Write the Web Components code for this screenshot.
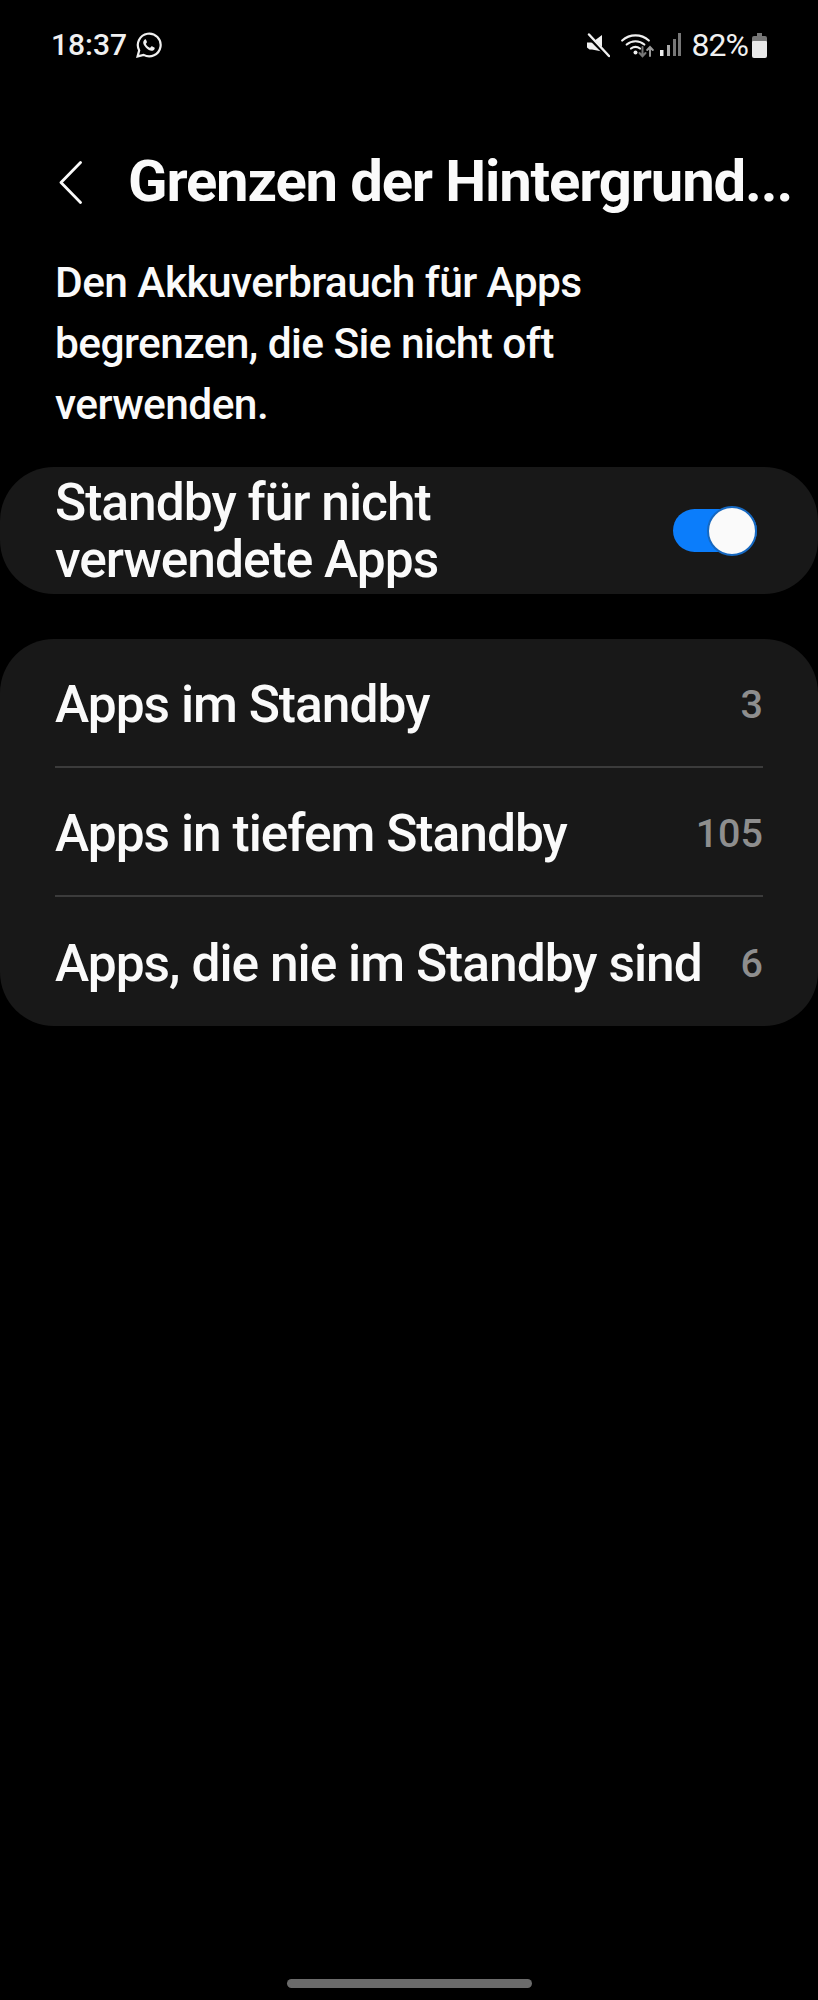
<!DOCTYPE html>
<html lang="de">
<head>
<meta charset="utf-8">
<title>Grenzen der Hintergrundnutzung</title>
<style>
  html, body { margin: 0; background: #000; }
  body { width: 818px; height: 2000px; overflow: hidden; display: flex; flex-direction: column; color: #fafafa; font-family: Roboto, "Liberation Sans", sans-serif; }
</style>
</head>
<body>
<status-bar time="18:37" battery="82%"></status-bar>
<page-header>Grenzen der Hintergrund...</page-header>
<page-intro>Den Akkuverbrauch für Apps<br>begrenzen, die Sie nicht oft<br>verwenden.</page-intro>
<switch-card>Standby für nicht<br>verwendete Apps</switch-card>
<list-card>
  <list-row count="3">Apps im Standby</list-row>
  <list-row count="105">Apps in tiefem Standby</list-row>
  <list-row count="6">Apps, die nie im Standby sind</list-row>
</list-card>
<home-bar></home-bar>

<script>
class StatusBar extends HTMLElement {
  constructor() {
    super();
    const shadow = this.attachShadow({ mode: "open" });
    shadow.innerHTML = `\
<style>
  :host { display: flex; align-items: center; height: 32px; margin-top: 29px; padding: 0 51px 0 51px; font-size: 30px; font-weight: 500; color: #f0f0f0; }
  svg { display: block; flex: none; }
  #time { line-height: 32px; }
  #wa { margin-left: 9px; }
  #spacer { flex: 1; }
  #mute { margin-right: 11px; }
  #wifi { margin-right: 5px; }
  #signal { margin-right: 11px; }
  #pct { font-size: 32px; font-weight: 400; letter-spacing: -1px; line-height: 32px; margin-right: 4px; }
</style>
<span id="time">${this.getAttribute("time")}</span>
<svg id="wa" width="26" height="26" viewBox="0 0 26 26" fill="none" stroke="#f0f0f0">
  <path stroke-width="2.2" d="M1.6 24.4l1.6-6A11.4 11.4 0 1 1 7.6 22.9z"/>
  <path fill="#f0f0f0" stroke="none" d="M9.6 7.2c-.5 0-1 .2-1.4.7-.6.7-1 1.500-1 2.600 0 1.700 1.100 3.400 2.800 5.200 1.900 1.900 3.800 3 5.600 3 1.200 0 2.100-.6 2.700-1.300.4-.5.500-1.200.4-1.700l-2.700-1.400c-.3-.1-.5 0-.7.200l-.9 1.100c-.2.200-.4.200-.7.100-1.700-.7-3-2-3.800-3.600-.1-.3 0-.5.200-.7l.7-.9c.2-.2.200-.4.100-.7l-1.100-2.600z"/>
</svg>
<span id="spacer"></span>
<svg id="mute" width="23" height="25" viewBox="0 0 23 25">
  <path fill="#f0f0f0" d="M0 9.500h5L15 2v16.500L5 16.500H2.500L0 14.500z"/>
  <path stroke="#000" stroke-width="4" d="M0 2l22 22"/>
  <path stroke="#f0f0f0" stroke-width="2.400" stroke-linecap="round" d="M2 1.500l20 21.500"/>
</svg>
<svg id="wifi" width="33" height="26" viewBox="0 0 33 26" fill="none" stroke-linecap="round">
  <g stroke="#f0f0f0" stroke-width="2.200">
    <path d="M1.200 8.500a20 20 0 0 1 26.600 0"/>
    <path d="M5.700 12.500a13.500 13.500 0 0 1 17.600 0"/>
    <path d="M10 16.500a7.400 7.400 0 0 1 9 0"/>
  </g>
  <circle cx="14.500" cy="20.500" r="2" fill="#f0f0f0"/>
  <path stroke="#777" stroke-width="2" d="M21.500 15v9M18.500 21l3 3.200 3-3.200"/>
  <path stroke="#999" stroke-width="2" d="M29 24v-9M26.200 18l2.800-3 2.800 3"/>
</svg>
<svg id="signal" width="22" height="24" viewBox="0 0 22 24">
  <rect x="1" y="17" width="3.500" height="6" fill="#eee"/>
  <rect x="8" y="12" width="3" height="11" fill="#aaa"/>
  <rect x="14" y="6" width="3" height="17" fill="#777"/>
  <rect x="19" y="0" width="3" height="23" fill="#777"/>
</svg>
<span id="pct">${this.getAttribute("battery")}</span>
<svg width="15" height="25" viewBox="0 0 15 25">
  <path fill="#e8e8e8" d="M2 7h11a2 2 0 0 1 2 2v14a2 2 0 0 1-2 2H2a2 2 0 0 1-2-2V9a2 2 0 0 1 2-2z"/>
  <path fill="#777" d="M5 0h5v3h3a2 2 0 0 1 2 2v3H0V5a2 2 0 0 1 2-2h3z"/>
</svg>
`;
  }
}

class PageHeader extends HTMLElement {
  constructor() {
    super();
    const shadow = this.attachShadow({ mode: "open" });
    shadow.innerHTML = `\
<style>
  :host { display: flex; align-items: center; height: 70px; margin-top: 86px; padding-left: 59px; }
  svg { display: block; flex: none; margin-right: 46px; }
  h1 { margin: 0 0 2px; font-size: 58px; font-weight: 700; letter-spacing: -1.15px; white-space: nowrap; line-height: 70px; }
</style>
<svg width="23" height="43" viewBox="0 0 23 43" fill="none" stroke="#fafafa" stroke-width="2.800" stroke-linecap="round" stroke-linejoin="round">
  <path d="M21.500 1.500L2 21.500l19.500 20"/>
</svg>
<h1><slot></slot></h1>
`;
  }
}

class PageIntro extends HTMLElement {
  constructor() {
    super();
    const shadow = this.attachShadow({ mode: "open" });
    shadow.innerHTML = `\
<style>
  :host { display: block; margin-top: 35px; padding: 0 55px; font-size: 42.5px; letter-spacing: -0.6px; line-height: 61px; font-weight: 500; }
</style>
<slot></slot>
`;
  }
}

class SwitchCard extends HTMLElement {
  constructor() {
    super();
    const shadow = this.attachShadow({ mode: "open" });
    shadow.innerHTML = `\
<style>
  :host { display: flex; align-items: center; justify-content: space-between; box-sizing: border-box; height: 127px; margin-top: 32px; padding: 0 61px 0 55px; background: #181818; border-radius: 54px; font-size: 51.5px; letter-spacing: -1px; font-weight: 500; line-height: 57px; }
  #toggle { display: flex; align-items: center; justify-content: flex-end; width: 84px; height: 43px; border-radius: 22px; background: #0b7dfb; }
  #thumb { flex: none; box-sizing: border-box; width: 50px; height: 50px; border-radius: 50%; background: #fafafa; border: 2px solid #1668c0; }
</style>
<span><slot></slot></span>
<div id="toggle"><div id="thumb"></div></div>
`;
  }
}

class ListCard extends HTMLElement {
  constructor() {
    super();
    const shadow = this.attachShadow({ mode: "open" });
    shadow.innerHTML = `\
<style>
  :host { display: flex; flex-direction: column; margin-top: 45px; background: #181818; border-radius: 54px; }
</style>
<slot></slot>
`;
  }
}

class ListRow extends HTMLElement {
  constructor() {
    super();
    const shadow = this.attachShadow({ mode: "open" });
    shadow.innerHTML = `\
<style>
  :host { display: block; padding: 0 55px; font-size: 51.5px; letter-spacing: -1px; font-weight: 500; }
  :host(:not(:last-child)) #row { border-bottom: 2px solid #3b3b3b; }
  #row { display: flex; align-items: center; justify-content: space-between; box-sizing: border-box; height: 129px; padding-top: 3px; white-space: nowrap; }
  #count { font-size: 39.5px; letter-spacing: 0; color: #8e8e8e; }
</style>
<div id="row"><span><slot></slot></span><span id="count">${this.getAttribute("count")}</span></div>
`;
  }
}

class HomeBar extends HTMLElement {
  constructor() {
    super();
    this.attachShadow({ mode: "open" }).innerHTML = `\
<style>
  :host { display: block; margin-top: auto; padding: 0 286px 12px 287px; }
  div { height: 9px; border-radius: 5px; background: #6b6b6b; }
</style>
<div></div>
`;
  }
}

customElements.define("status-bar", StatusBar);
customElements.define("page-header", PageHeader);
customElements.define("page-intro", PageIntro);
customElements.define("switch-card", SwitchCard);
customElements.define("list-card", ListCard);
customElements.define("list-row", ListRow);
customElements.define("home-bar", HomeBar);
</script>
</body>
</html>
